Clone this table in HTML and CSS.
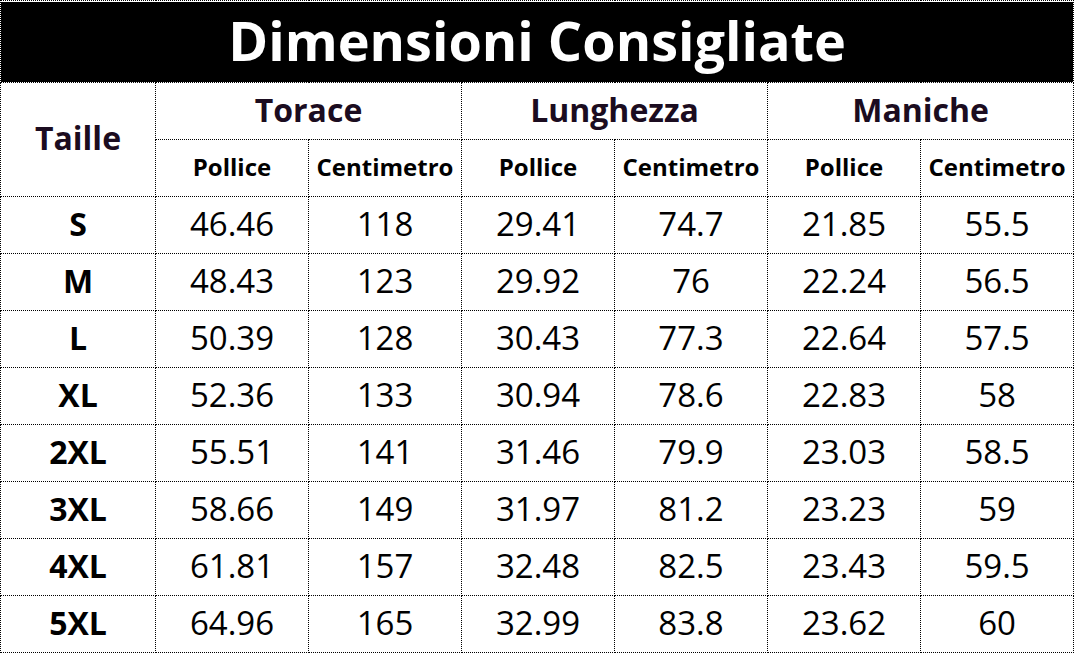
FILE: index.html
```html
<!DOCTYPE html>
<html lang="it">
<head>
<meta charset="utf-8">
<title>Dimensioni Consigliate</title>
<link rel="stylesheet" href="styles.css">
</head>
<body>
<table class="size-table">
  <colgroup>
    <col class="col-size">
    <col class="col-val"><col class="col-val">
    <col class="col-val"><col class="col-val">
    <col class="col-val"><col class="col-val">
  </colgroup>
  <thead>
    <tr class="title-row">
      <th colspan="7" class="title-cell"><div class="title-bar">Dimensioni Consigliate</div></th>
    </tr>
    <tr class="group-row">
      <th rowspan="2" class="size-head">Taille</th>
      <th colspan="2" class="group-head">Torace</th>
      <th colspan="2" class="group-head">Lunghezza</th>
      <th colspan="2" class="group-head">Maniche</th>
    </tr>
    <tr class="unit-row">
      <th class="unit-head">Pollice</th><th class="unit-head">Centimetro</th>
      <th class="unit-head">Pollice</th><th class="unit-head">Centimetro</th>
      <th class="unit-head">Pollice</th><th class="unit-head">Centimetro</th>
    </tr>
  </thead>
  <tbody>
    <tr><th class="size">S</th><td>46.46</td><td>118</td><td>29.41</td><td>74.7</td><td>21.85</td><td>55.5</td></tr>
    <tr><th class="size">M</th><td>48.43</td><td>123</td><td>29.92</td><td>76</td><td>22.24</td><td>56.5</td></tr>
    <tr><th class="size">L</th><td>50.39</td><td>128</td><td>30.43</td><td>77.3</td><td>22.64</td><td>57.5</td></tr>
    <tr><th class="size">XL</th><td>52.36</td><td>133</td><td>30.94</td><td>78.6</td><td>22.83</td><td>58</td></tr>
    <tr><th class="size">2XL</th><td>55.51</td><td>141</td><td>31.46</td><td>79.9</td><td>23.03</td><td>58.5</td></tr>
    <tr><th class="size">3XL</th><td>58.66</td><td>149</td><td>31.97</td><td>81.2</td><td>23.23</td><td>59</td></tr>
    <tr><th class="size">4XL</th><td>61.81</td><td>157</td><td>32.48</td><td>82.5</td><td>23.43</td><td>59.5</td></tr>
    <tr><th class="size">5XL</th><td>64.96</td><td>165</td><td>32.99</td><td>83.8</td><td>23.62</td><td>60</td></tr>
  </tbody>
</table>
</body>
</html>
```
FILE: styles.css
```css
html, body {
  margin: 0;
  padding: 0;
  background: #ffffff;
}

.size-table {
  border-collapse: collapse;
  table-layout: fixed;
  width: 1073px;
  font-family: "Open Sans", "Noto Sans", sans-serif;
  color: #000;
}

.col-size { width: 155px; }
.col-val { width: 153px; }

.size-table th,
.size-table td {
  border: 1px dotted #000;
  padding: 0 0 4px;
  text-align: center;
  vertical-align: middle;
  box-sizing: border-box;
}

.size-table .title-cell {
  height: 82px;
  padding: 0;
}

.title-bar {
  background: #000;
  color: #fff;
  height: 80px;
  display: flex;
  align-items: center;
  justify-content: center;
  font-size: 54px;
  font-weight: 700;
  line-height: 1;
  padding-bottom: 4px;
  box-sizing: border-box;
}

.group-row th,
.unit-row th,
.size-table tbody tr th,
.size-table tbody tr td {
  height: 57px;
}

.size-head {
  font-size: 32px;
  font-weight: 700;
  color: #1b0c20;
}

.group-head {
  font-size: 32px;
  font-weight: 700;
  color: #1b0c20;
}

.unit-head {
  font-size: 24px;
  font-weight: 700;
  color: #000;
}

.size {
  font-size: 32px;
  font-weight: 700;
}

.size-table tbody td {
  font-size: 33px;
  font-weight: 400;
}
```
